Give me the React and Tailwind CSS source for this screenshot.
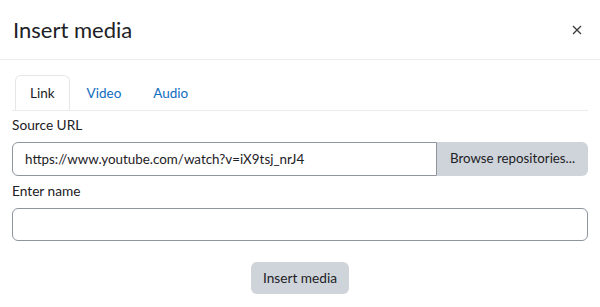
export default function App() {
  return (
    <div
      className="w-[600px] h-[307px] bg-white text-[#1d2125] overflow-hidden"
      style={{ fontFamily: 'Lato, "Noto Sans", sans-serif' }}
    >
      <div className="h-[60px] border-b border-[#ececec] flex items-center justify-between pl-[13px] pr-[17px]">
        <h5 className="text-[22px] leading-[27px] font-normal text-[#1d2125]">Insert media</h5>
        <button className="w-[12px] h-[12px] flex items-center justify-center text-[#3a3a3a]">
          <svg width="10" height="10" viewBox="0 0 10 10" fill="none" stroke="currentColor" strokeWidth="1.3">
            <path d="M1 1 L9 9 M9 1 L1 9" />
          </svg>
        </button>
      </div>
      <div className="px-[12px] pt-[15px]">
        <ul className="flex border-b border-[#ececec] pl-[3px] text-[13.5px]">
          <li className="h-[35px] px-[14px] flex items-center border border-b-0 border-[#e6e6e6] rounded-t-[6px] -mb-px bg-white text-[#1d2125]">Link</li>
          <li className="h-[35px] pl-[16px] pr-[15px] flex items-center border border-transparent border-b-0 text-[#0f6cbf]">Video</li>
          <li className="h-[35px] px-[15px] flex items-center border border-transparent border-b-0 text-[#0f6cbf]">Audio</li>
        </ul>
        <label className="block mt-[3px] mb-[6px] text-[13.7px] leading-[22px]">Source URL</label>
        <div className="flex h-[34px]">
          <input
            readOnly
            value="https://www.youtube.com/watch?v=iX9tsj_nrJ4"
            className="flex-1 min-w-0 h-full border border-[#8f959e] rounded-l-[6px] px-[12px] text-[13.4px] text-[#1d2125] outline-none"
          />
          <button className="h-full w-[151px] bg-[#ced4da] rounded-r-[6px] text-[13.3px] text-[#1d2125] flex items-center justify-center whitespace-nowrap">
            Browse repositories...
          </button>
        </div>
        <label className="block mt-[4px] mb-[6px] text-[13.7px] leading-[22px]">Enter name</label>
        <input className="block w-full h-[33px] border border-[#8f959e] rounded-[6px] px-[12px] text-[13px] outline-none" />
        <div className="flex justify-center mt-[21px]">
          <button className="w-[98px] h-[32px] bg-[#ced4da] rounded-[6px] text-[13.7px] text-[#1d2125] flex items-center justify-center whitespace-nowrap">
            Insert media
          </button>
        </div>
      </div>
    </div>
  );
}
